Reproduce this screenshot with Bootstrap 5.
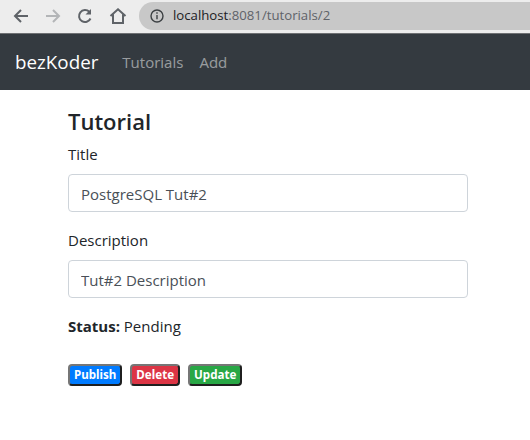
<!DOCTYPE html>
<html lang="en">
<head>
<meta charset="utf-8">
<title>bezKoder</title>
<link href="https://cdn.jsdelivr.net/npm/bootstrap@5.3.0/dist/css/bootstrap.min.css" rel="stylesheet">
<style>
html, body { height: 100%; }
body { font-family: "Open Sans", "Noto Sans", sans-serif; font-size: 15px; color: #212529; background: #fff; overflow: hidden; }
.chrome-bar { height: 34px; background: #ededed; border-bottom: 1px solid #6e7073; padding: 0 0 2px 13px; }
.chrome-ico { flex: none; display: block; }
.omnibox { flex: 1; height: 28px; margin-left: -4px; background: #c8c8c8; border-radius: 15px 0 0 15px; padding-left: 11px; font-size: 13.2px; color: #5f6368; }
.omnibox b { font-weight: 400; color: #202124; }
.omni-text { margin-left: 9px; }
.app-nav { height: 56px; background: #343a40; padding: 0 16px; }
.app-brand { font-size: 18.8px; color: #fff; margin-right: 24px; margin-left: -1px; padding-top: 1px; }
.app-link { font-size: 15px; color: rgba(255,255,255,.5); margin-right: 16px; }
.form-wrap { width: 400px; margin-left: 68px; padding-top: 18px; }
.form-wrap h4 { font-size: 22px; font-weight: 600; line-height: 1.2; margin: 0 0 8px; color: #212529; }
.fld { margin-bottom: 16px; }
.fld-label { display: block; font-size: 15px; line-height: 24px; margin-bottom: 8px; }
.fld-input { height: 38px; padding: 7px 12px 5px; font-size: 15px; color: #495057; border: 1px solid #ced4da; border-radius: 4px; font-family: inherit; }
.status-line { font-size: 15px; line-height: 24px; margin-bottom: 16px; margin-top: 16px; }
.status-line strong { font-weight: 700; }
.act-row { padding-top: 10px; gap: 8px; }
.act-btn { font-family: "Noto Sans", "Open Sans", sans-serif; font-weight: 700; font-size: 11.6px; line-height: 14px; height: 22px; padding: 2px 4px; color: #fff; border-radius: 4px; border: 2px solid; border-color: #767676 #1f1f1f #1f1f1f #767676; }
.act-blue { background: #007bff; }
.act-red { background: #dc3545; }
.act-green { background: #28a745; }
</style>
</head>
<body>
<div class="chrome-bar d-flex align-items-center gap-3">
  <svg class="chrome-ico" width="16" height="16" viewBox="0 0 16 16" fill="none" stroke="#5f6368" stroke-width="2"><path d="M15 8H2M8 2 2 8l6 6"/></svg>
  <svg class="chrome-ico" width="16" height="16" viewBox="0 0 16 16" fill="none" stroke="#b3b5b7" stroke-width="2"><path d="M1 8h13M8 2l6 6-6 6"/></svg>
  <svg class="chrome-ico" width="16" height="16" viewBox="0 0 16 16" fill="none" stroke="#5f6368" stroke-width="2"><path d="M13.5 10.5A6 6 0 1 1 12.3 3.8"/><path d="M14 1v5.5H8.5z" fill="#5f6368" stroke="none"/></svg>
  <svg class="chrome-ico" width="18" height="16" viewBox="0 0 18 16" fill="none" stroke="#5f6368" stroke-width="2"><path d="M1.5 8 9 1.3 16.500 8M4 6.500V15h10V6.500"/></svg>
  <div class="omnibox d-flex align-items-center">
    <svg class="chrome-ico" width="14" height="14" viewBox="0 0 14 14" fill="none" stroke="#3c4043" stroke-width="1.400"><circle cx="7" cy="7" r="6"/><path d="M7 6v4.300M7 3.300v1.400"/></svg>
    <span class="omni-text"><b>localhost</b>:8081/tutorials/2</span>
  </div>
</div>
<nav class="app-nav d-flex align-items-center">
  <a class="app-brand text-decoration-none" href="#">bezKoder</a>
  <a class="app-link text-decoration-none" href="#">Tutorials</a>
  <a class="app-link text-decoration-none" href="#">Add</a>
</nav>
<div class="form-wrap">
  <h4>Tutorial</h4>
  <form>
    <div class="fld">
      <label class="fld-label" for="t">Title</label>
      <input id="t" class="form-control fld-input" value="PostgreSQL Tut#2">
    </div>
    <div class="fld">
      <label class="fld-label" for="d">Description</label>
      <input id="d" class="form-control fld-input" value="Tut#2 Description">
    </div>
    <div class="status-line"><strong>Status:</strong> Pending</div>
  </form>
  <div class="d-flex act-row">
    <button type="button" class="act-btn act-blue">Publish</button>
    <button type="button" class="act-btn act-red">Delete</button>
    <button type="button" class="act-btn act-green">Update</button>
  </div>
</div>
<script src="https://cdn.jsdelivr.net/npm/bootstrap@5.3.0/dist/js/bootstrap.bundle.min.js"></script>
</body>
</html>
